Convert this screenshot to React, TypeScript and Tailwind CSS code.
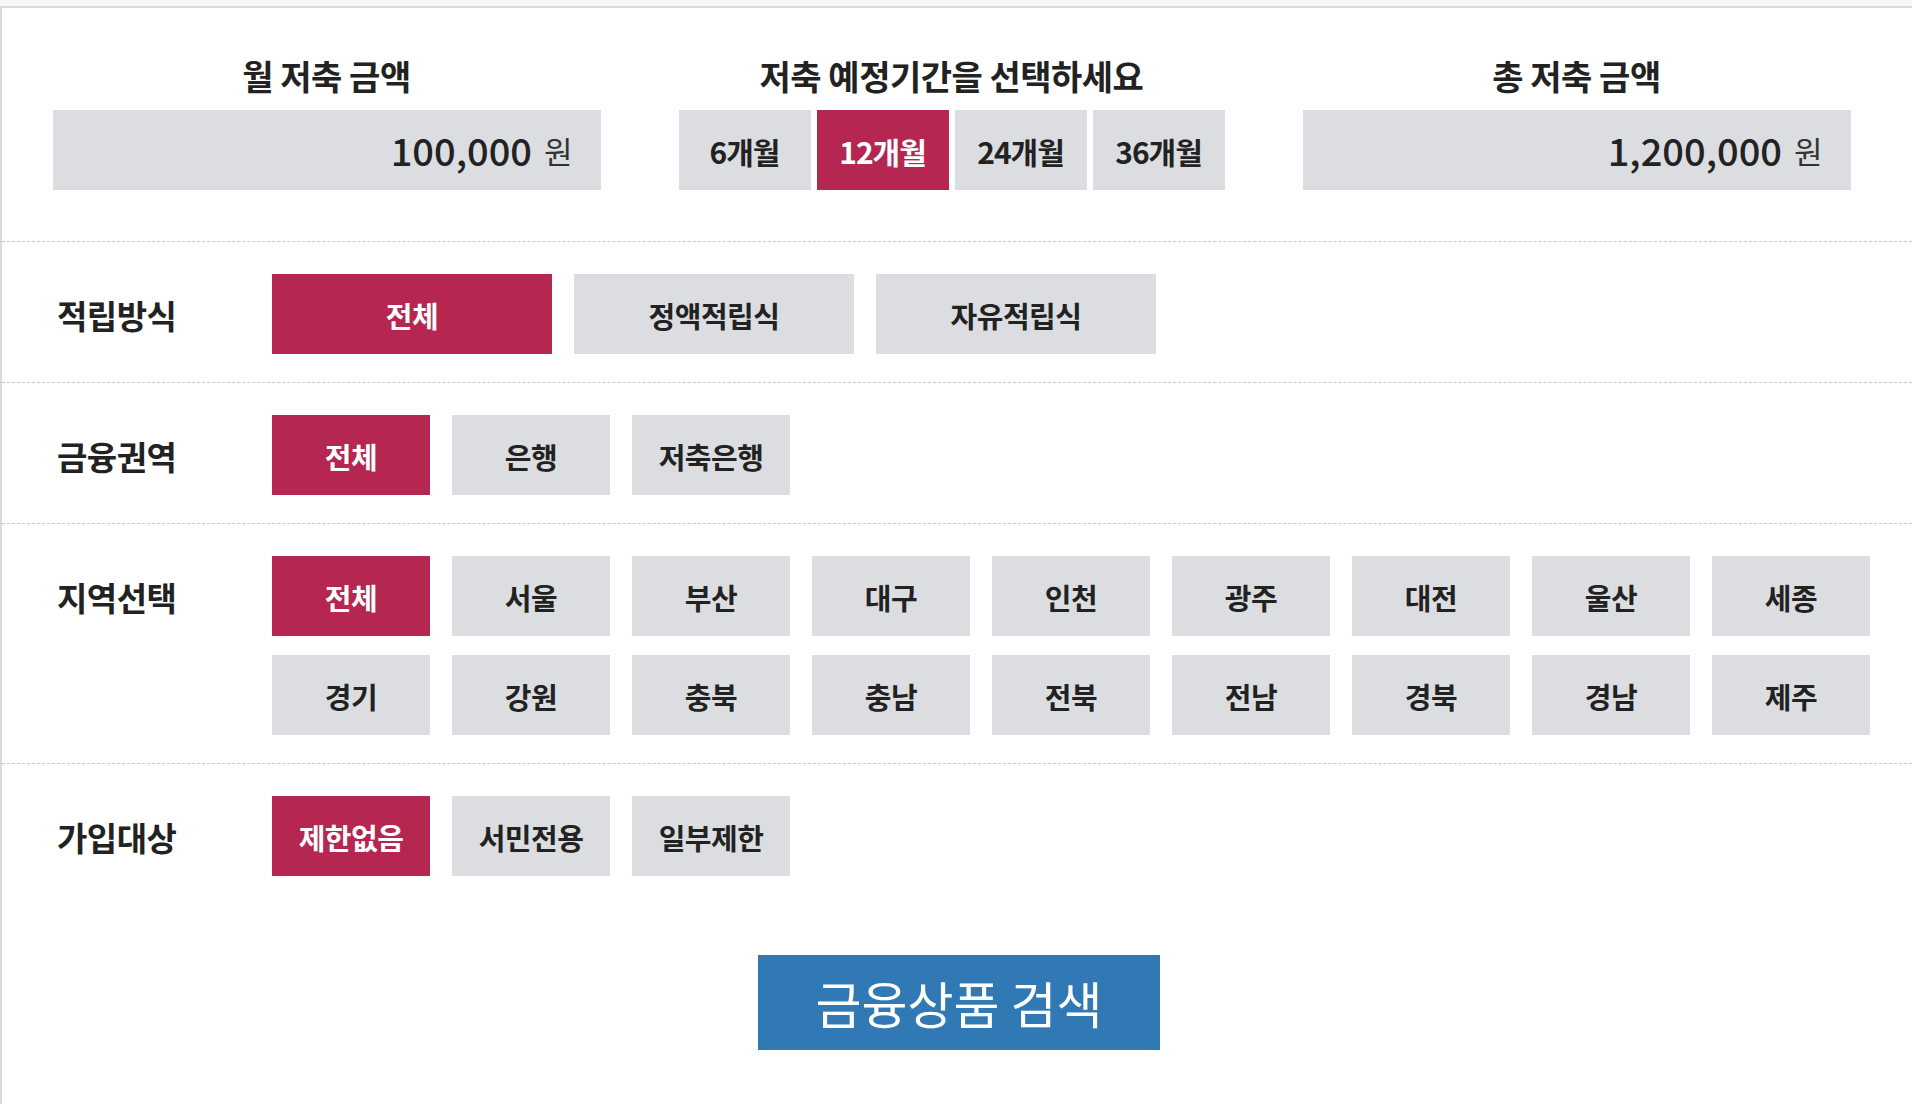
import React, { useState } from 'react';

const FONT = "font-['Noto_Sans_CJK_KR','Noto_Sans',sans-serif]";

const periods = ['6개월', '12개월', '24개월', '36개월'];
const methods = ['전체', '정액적립식', '자유적립식'];
const sectors = ['전체', '은행', '저축은행'];
const regions = [
  '전체', '서울', '부산', '대구', '인천', '광주', '대전', '울산', '세종',
  '경기', '강원', '충북', '충남', '전북', '전남', '경북', '경남', '제주',
];
const targets = ['제한없음', '서민전용', '일부제한'];

const OptionButton: React.FC<{ label: string; active: boolean; wide?: boolean; onClick: () => void }> = ({ label, active, wide, onClick }) => (
  <button
    onClick={onClick}
    className={`${wide ? 'w-[280px]' : 'w-[158px]'} h-[80px] pt-[3px] flex items-center justify-center text-[29px] font-bold tracking-[-0.5px] cursor-pointer ${
      active ? 'bg-[#b52651] text-white' : 'bg-[#dcdde1] text-[#222]'
    }`}
  >
    {label}
  </button>
);

const FilterRow: React.FC<{ title: string; last?: boolean; children: React.ReactNode }> = ({ title, last, children }) => (
  <div className={`flex border-t border-dashed border-[#c8c8c8] pt-[32px] ${last ? 'pb-0' : 'pb-[28px]'}`}>
    <div className="w-[215px] ml-[55px] h-[80px] pt-[4px] flex items-center text-[33px] font-bold text-[#222] tracking-[-0.5px] shrink-0">
      {title}
    </div>
    {children}
  </div>
);

export default function App() {
  const [period, setPeriod] = useState('12개월');
  const [method, setMethod] = useState('전체');
  const [sector, setSector] = useState('전체');
  const [region, setRegion] = useState('전체');
  const [target, setTarget] = useState('제한없음');

  const monthly = 100000;
  const months = parseInt(period, 10);
  const total = monthly * months;

  return (
    <div className={`min-h-screen bg-[#f6f6f6] pt-[6px] overflow-hidden ${FONT}`}>
      <div className="min-h-[1098px] bg-white border-l-2 border-t-2 border-[#dadada]">
        {/* 상단 금액 / 기간 */}
        <div className="flex pl-[12px] pt-[47px] pb-[51px]">
          <div className="w-[625px] flex flex-col items-center">
            <div className="h-[41px] flex items-center text-[34px] font-bold text-[#222] tracking-[-0.5px]">월 저축 금액</div>
            <div className="mt-[14px] w-[548px] h-[80px] bg-[#dcdde1] flex items-center justify-end pr-[28px] gap-[12px]">
              <span className="text-[38px] leading-none font-medium text-[#222]">{monthly.toLocaleString('en-US')}</span>
              <span className="text-[31px] leading-none text-[#333]">원</span>
            </div>
          </div>
          <div className="w-[625px] flex flex-col items-center">
            <div className="h-[41px] flex items-center text-[34px] font-bold text-[#222] tracking-[-0.5px]">저축 예정기간을 선택하세요</div>
            <div className="mt-[14px] flex gap-[6px]">
              {periods.map((p) => (
                <button
                  key={p}
                  onClick={() => setPeriod(p)}
                  className={`w-[132px] h-[80px] pt-[2px] flex items-center justify-center text-[30px] font-bold tracking-[-1px] cursor-pointer ${
                    period === p ? 'bg-[#b52651] text-white' : 'bg-[#dcdde1] text-[#222]'
                  }`}
                >
                  {p}
                </button>
              ))}
            </div>
          </div>
          <div className="w-[625px] flex flex-col items-center">
            <div className="h-[41px] flex items-center text-[34px] font-bold text-[#222] tracking-[-0.5px]">총 저축 금액</div>
            <div className="mt-[14px] w-[548px] h-[80px] bg-[#dcdde1] flex items-center justify-end pr-[28px] gap-[12px]">
              <span className="text-[38px] leading-none font-medium text-[#222]">{total.toLocaleString('en-US')}</span>
              <span className="text-[31px] leading-none text-[#333]">원</span>
            </div>
          </div>
        </div>

        <FilterRow title="적립방식">
          <div className="flex gap-[22px]">
            {methods.map((m) => (
              <OptionButton key={m} label={m} wide active={method === m} onClick={() => setMethod(m)} />
            ))}
          </div>
        </FilterRow>

        <FilterRow title="금융권역">
          <div className="flex gap-[22px]">
            {sectors.map((s) => (
              <OptionButton key={s} label={s} active={sector === s} onClick={() => setSector(s)} />
            ))}
          </div>
        </FilterRow>

        <FilterRow title="지역선택">
          <div className="grid grid-cols-9 gap-x-[22px] gap-y-[19px]">
            {regions.map((r) => (
              <OptionButton key={r} label={r} active={region === r} onClick={() => setRegion(r)} />
            ))}
          </div>
        </FilterRow>

        <FilterRow title="가입대상" last>
          <div className="flex gap-[22px]">
            {targets.map((t) => (
              <OptionButton key={t} label={t} active={target === t} onClick={() => setTarget(t)} />
            ))}
          </div>
        </FilterRow>

        <div className="flex pl-[756px] pt-[79px]">
          <button className="w-[402px] h-[95px] bg-[#3179b5] text-white text-[50px] flex items-center justify-center cursor-pointer">
            금융상품 검색
          </button>
        </div>
      </div>
    </div>
  );
}
